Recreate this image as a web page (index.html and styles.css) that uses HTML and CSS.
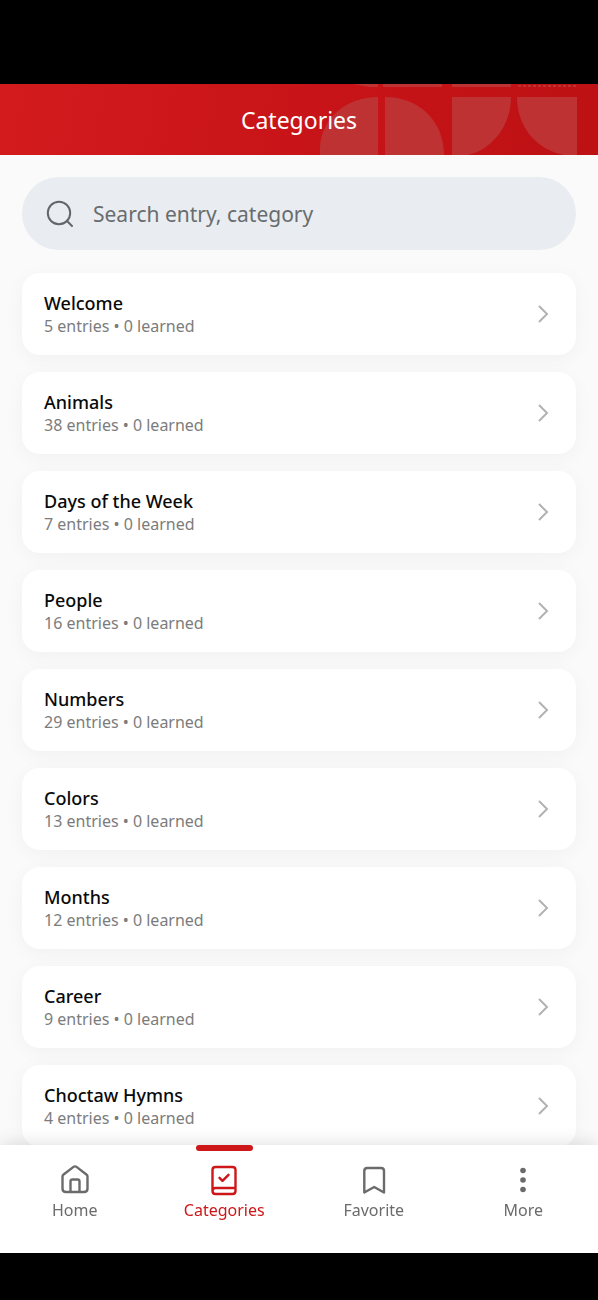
FILE: index.html
```html
<!DOCTYPE html>
<html lang="en">
<head>
<meta charset="utf-8">
<meta name="viewport" content="width=device-width, initial-scale=1">
<title>Categories</title>
<link rel="stylesheet" href="styles.css">
</head>
<body>
<div class="app">
  <header class="header">
    <svg class="header-art" viewBox="0 0 278 71" aria-hidden="true">
      <path d="M34 0H58V3H50Q41 2 34 0ZM63 0H122V3H63ZM132 0H191V3H132Z"/>
      <path d="M198 2H257" fill="none" stroke="currentColor" stroke-width="2" stroke-dasharray="3 2"/>
      <path d="M0 71V63C2 34 26 13 58 13V71ZM65 13C99 13 124 37 124 71H65ZM132 13H191C191 40 174 65 148 71H132ZM197 13H257V71H244C217 66 197 43 197 13Z"/>
    </svg>
    <h1 class="title">Categories</h1>
  </header>
  <main class="content">
    <label class="search">
      <svg class="search-icon" viewBox="0 0 28 28" aria-hidden="true"><circle cx="13" cy="13" r="11.2"/><path d="M20.8 20.8L26 26"/></svg>
      <input class="search-input" type="search" placeholder="Search entry, category" aria-label="Search entry, category">
    </label>
    <ul class="list">
      <li><a class="card" href="#welcome"><span class="card-text"><span class="name">Welcome</span><span class="meta">5 entries • 0 learned</span></span><svg class="chevron" viewBox="0 0 12 20" aria-hidden="true"><path d="M2 2l8 8-8 8"/></svg></a></li>
      <li><a class="card" href="#animals"><span class="card-text"><span class="name">Animals</span><span class="meta">38 entries • 0 learned</span></span><svg class="chevron" viewBox="0 0 12 20" aria-hidden="true"><path d="M2 2l8 8-8 8"/></svg></a></li>
      <li><a class="card" href="#days"><span class="card-text"><span class="name">Days of the Week</span><span class="meta">7 entries • 0 learned</span></span><svg class="chevron" viewBox="0 0 12 20" aria-hidden="true"><path d="M2 2l8 8-8 8"/></svg></a></li>
      <li><a class="card" href="#people"><span class="card-text"><span class="name">People</span><span class="meta">16 entries • 0 learned</span></span><svg class="chevron" viewBox="0 0 12 20" aria-hidden="true"><path d="M2 2l8 8-8 8"/></svg></a></li>
      <li><a class="card" href="#numbers"><span class="card-text"><span class="name">Numbers</span><span class="meta">29 entries • 0 learned</span></span><svg class="chevron" viewBox="0 0 12 20" aria-hidden="true"><path d="M2 2l8 8-8 8"/></svg></a></li>
      <li><a class="card" href="#colors"><span class="card-text"><span class="name">Colors</span><span class="meta">13 entries • 0 learned</span></span><svg class="chevron" viewBox="0 0 12 20" aria-hidden="true"><path d="M2 2l8 8-8 8"/></svg></a></li>
      <li><a class="card" href="#months"><span class="card-text"><span class="name">Months</span><span class="meta">12 entries • 0 learned</span></span><svg class="chevron" viewBox="0 0 12 20" aria-hidden="true"><path d="M2 2l8 8-8 8"/></svg></a></li>
      <li><a class="card" href="#career"><span class="card-text"><span class="name">Career</span><span class="meta">9 entries • 0 learned</span></span><svg class="chevron" viewBox="0 0 12 20" aria-hidden="true"><path d="M2 2l8 8-8 8"/></svg></a></li>
      <li><a class="card" href="#hymns"><span class="card-text"><span class="name">Choctaw Hymns</span><span class="meta">4 entries • 0 learned</span></span><svg class="chevron" viewBox="0 0 12 20" aria-hidden="true"><path d="M2 2l8 8-8 8"/></svg></a></li>
    </ul>
  </main>
  <nav class="tabs" aria-label="Main">
    <a class="tab" href="#home">
      <svg class="tab-icon" viewBox="0 0 32 32" aria-hidden="true"><path d="M3.5 12.7Q3.5 11.3 4.6 10.5L14.5 2.9Q16 1.800 17.5 2.900L27.4 10.500Q28.5 11.300 28.5 12.700V24.500Q28.5 28 25 28H7Q3.5 28 3.5 24.500ZM11.500 28V17.500Q11.500 15.500 13.500 15.500H18.500Q20.500 15.500 20.500 17.500V28"/></svg>
      <span>Home</span>
    </a>
    <a class="tab active" href="#categories" aria-current="page">
      <svg class="tab-icon" viewBox="0 0 32 32" aria-hidden="true"><path d="M4.5 27V6Q4.5 3 7.5 3H24.5Q27.5 3 27.5 6V27Q27.5 30 24.5 30H7.5Q4.5 30 4.5 27T7.5 24H27.5M11.5 13.8L14.5 16.8L20.5 10.8"/></svg>
      <span>Categories</span>
    </a>
    <a class="tab" href="#favorite">
      <svg class="tab-icon" viewBox="0 0 32 32" aria-hidden="true"><path d="M6.3 28.500V7Q6.3 4 9.300 4H23Q26 4 26 7V28.500L16.200 23Z"/></svg>
      <span>Favorite</span>
    </a>
    <a class="tab" href="#more">
      <svg class="tab-icon dots" viewBox="0 0 32 32" aria-hidden="true"><circle cx="16" cy="6.5" r="2.8"/><circle cx="16" cy="16" r="2.8"/><circle cx="16" cy="25.5" r="2.8"/></svg>
      <span>More</span>
    </a>
  </nav>
</div>
</body>
</html>
```
FILE: styles.css
```css
* {
  box-sizing: border-box;
}

body {
  margin: 0;
  background: #000;
  font-family: "Noto Sans", sans-serif;
}

.app {
  display: flex;
  flex-direction: column;
  height: 100vh;
  padding: 84px 0 47px;
}

.header {
  position: relative;
  flex: none;
  display: flex;
  align-items: center;
  justify-content: center;
  height: 71px;
  background: linear-gradient(100deg, #d31b1d, #c81418 50%, #bd1114);
  overflow: hidden;
}

.header-art {
  position: absolute;
  top: 0;
  right: 0;
  width: 278px;
  height: 71px;
  fill: #be3234;
  color: #be3234;
}

.title {
  position: relative;
  margin: 0;
  color: #fff;
  font-size: 23px;
  line-height: 32px;
  font-weight: 400;
}

.content {
  flex: 1;
  min-height: 0;
  padding: 22px 22px 0;
  background: #fafafa;
  overflow-y: auto;
  scrollbar-width: none;
}

.search {
  display: flex;
  align-items: center;
  gap: 19px;
  height: 73px;
  padding: 0 24px;
  border-radius: 37px;
  background: #e9edf1;
}

.search-icon {
  flex: none;
  width: 28px;
  height: 28px;
  fill: none;
  stroke: #626668;
  stroke-width: 2;
  stroke-linecap: round;
}

.search-input {
  flex: 1;
  min-width: 0;
  padding: 0;
  border: 0;
  outline: 0;
  background: transparent;
  color: #626668;
  font: inherit;
  font-size: 21px;
}

.search-input::placeholder {
  color: #686c6e;
  opacity: 1;
}

.list {
  display: grid;
  gap: 17px;
  margin: 0;
  padding: 23px 0;
  list-style: none;
}

.card {
  display: flex;
  align-items: center;
  justify-content: space-between;
  height: 82px;
  padding: 0 27px 0 22px;
  border-radius: 18px;
  background: #fff;
  box-shadow: 0 4px 20px rgba(0, 0, 0, 0.04);
  text-decoration: none;
}

.card-text {
  display: flex;
  flex-direction: column;
}

.name {
  color: #0a0a0a;
  font-size: 18px;
  line-height: 24px;
  font-weight: 500;
}

.meta {
  color: #7c7c7c;
  font-size: 16px;
  line-height: 22px;
}

.chevron {
  width: 12px;
  height: 20px;
  fill: none;
  stroke: #b2b2b2;
  stroke-width: 2;
}

.tabs {
  position: relative;
  flex: none;
  display: grid;
  grid-template-columns: repeat(4, 1fr);
  height: 108px;
  background: #fff;
  box-shadow: 0 -2px 16px rgba(0, 0, 0, 0.12);
}

.tab {
  position: relative;
  display: flex;
  flex-direction: column;
  align-items: center;
  gap: 3px;
  padding-top: 19px;
  color: #6b6b6b;
  font-size: 16px;
  line-height: 22px;
  text-decoration: none;
}

.tab.active {
  color: #cd1719;
}

.tab.active::before {
  content: "";
  position: absolute;
  top: 0;
  width: 57px;
  height: 6px;
  border-radius: 3px;
  background: #cd1719;
}

.tab-icon {
  width: 32px;
  height: 32px;
  fill: none;
  stroke: currentColor;
  stroke-width: 2.4;
  stroke-linecap: round;
  stroke-linejoin: round;
}

.dots {
  fill: currentColor;
  stroke: none;
}
```
